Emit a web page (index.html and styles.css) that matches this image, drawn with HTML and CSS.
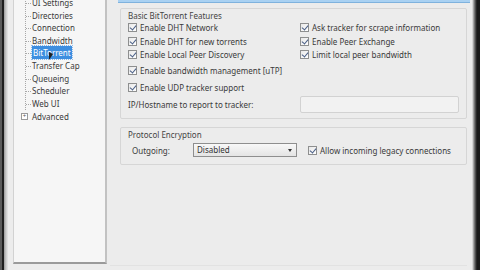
FILE: index.html
```html
<!DOCTYPE html>
<html>
<head>
<meta charset="utf-8">
<link rel="stylesheet" href="styles.css">
</head>
<body>
<div class="window">
  <div class="frame-left"></div>
  <div class="side">
    <div class="tree">
      <ul class="nodes">
        <li class="node cut">UI Settings</li>
        <li class="node">Directories</li>
        <li class="node">Connection</li>
        <li class="node">Bandwidth</li>
        <li class="node"><span class="sel">BitTorrent</span><span class="cursor"></span></li>
        <li class="node">Transfer Cap</li>
        <li class="node">Queueing</li>
        <li class="node">Scheduler</li>
        <li class="node last">Web UI</li>
      </ul>
      <div class="root"><span class="plus">+</span>Advanced</div>
    </div>
  </div>
  <div class="main">
    <div class="topbar"></div>
    <div class="group g1">
      <div class="legend">Basic BitTorrent Features</div>
      <div class="cols">
        <div class="col">
          <label class="cb"><span class="box"></span>Enable DHT Network</label>
          <label class="cb"><span class="box"></span>Enable DHT for new torrents</label>
          <label class="cb"><span class="box"></span>Enable Local Peer Discovery</label>
          <label class="cb gap"><span class="box"></span>Enable bandwidth management [uTP]</label>
          <label class="cb gap"><span class="box"></span>Enable UDP tracker support</label>
        </div>
        <div class="col c2">
          <label class="cb"><span class="box"></span>Ask tracker for scrape information</label>
          <label class="cb"><span class="box"></span>Enable Peer Exchange</label>
          <label class="cb"><span class="box"></span>Limit local peer bandwidth</label>
        </div>
      </div>
      <div class="iprow">
        <span class="iplabel">IP/Hostname to report to tracker:</span>
        <span class="input"></span>
      </div>
    </div>
    <div class="group g2">
      <div class="legend">Protocol Encryption</div>
      <div class="encrow">
        <span class="outlabel">Outgoing:</span>
        <span class="select">Disabled<span class="arrow"></span></span>
        <label class="cb inline"><span class="box"></span>Allow incoming legacy connections</label>
      </div>
    </div>
    <div class="bottomline"></div>
  </div>
  <div class="frame-right"></div>
</div>
</body>
</html>
```
FILE: styles.css
```css
* { box-sizing: border-box; }
html, body { margin: 0; padding: 0; }
body {
  width: 480px; height: 270px; overflow: hidden;
  background: #ececec;
  font-family: "Noto Sans", "Open Sans", sans-serif;
  font-size: 8px;
  color: #3a3a3a;
}
.window { display: flex; height: 270px; }
.frame-left {
  width: 8px; flex: none;
  background: linear-gradient(to right, #5a5a5a 0, #5a5a5a 2px, #1e1e1e 2px, #1e1e1e 4px, #9a9a9a 4px, #c8c8c8 6px, #e6e6e6 8px);
}
.side {
  width: 102px; flex: none;
  padding: 0 3px 6px 5px;
  display: flex;
}
.tree {
  flex: 1;
  background: #f6f6f6;
  border-left: 1px solid #d2d2d2;
  border-right: 2px solid #c2c2c2;
  border-bottom: 2px solid #9a9a9a;
  padding: 0;
  margin-top: -3px;
}
.nodes {
  list-style: none; margin: 0 0 0 11px; padding: 0;
  border-left: 1px dotted #a8a8a8;
}
.node {
  height: 12.6px; line-height: 12.6px;
  position: relative;
  padding-left: 6px;
  white-space: nowrap;
}
.node::before {
  content: ""; position: absolute; left: 0; top: 6px;
  width: 5px; border-top: 1px dotted #a8a8a8;
}
.sel {
  background: #3d8ee0;
  color: #fff;
  padding: 1px 1px;
  outline: 1px dotted #8bb9ea;
}
.cursor {
  position: absolute; left: 23px; top: 5px;
  width: 0; height: 0;
  border-left: 4px solid #222;
  border-top: 2px solid transparent;
  border-bottom: 6px solid transparent;
}
.root {
  height: 13px; line-height: 13px;
  display: flex; align-items: center;
  white-space: nowrap;
  padding-left: 7px;
}
.plus {
  width: 7px; height: 7px; border: 1px solid #9a9a9a;
  font-size: 6px; line-height: 5px; text-align: center; color: #555;
  margin-right: 4px;
  background: #fff;
}
.main {
  flex: 1;
  display: flex; flex-direction: column;
  padding: 0 5px 0 10px;
}
.topbar {
  height: 3px; margin-left: -2px; margin-right: -3px;
  background: #a9d1f2;
  border-bottom: 1px solid #7fb2dd;
  flex: none;
}
.group {
  border: 1px solid #d6d6d6;
  border-radius: 2px;
  padding: 1px 0 0 7px;
  flex: none;
}
.g1 { margin-top: 5px; height: 111px; }
.g2 { margin-top: 8px; height: 38px; }
.legend { height: 11px; line-height: 11px; color: #444; }
.cols { display: flex; }
.col { display: flex; flex-direction: column; width: 172px; }
.c2 { width: auto; }
.cb {
  display: flex; align-items: center;
  height: 13.5px; white-space: nowrap;
}
.cb.gap { height: 17px; }
.box {
  width: 9px; height: 9px; flex: none;
  border: 1px solid #8e8f8f;
  background: linear-gradient(135deg, #e8e8e8, #fff);
  margin-right: 3px;
  position: relative;
}
.box::after {
  content: ""; position: absolute; left: 2px; top: 0px;
  width: 3px; height: 5px;
  border-right: 1.5px solid #4a5f86;
  border-bottom: 1.5px solid #4a5f86;
  transform: rotate(40deg);
}
.iprow { display: flex; align-items: center; margin-top: 0px; height: 18px; }
.iplabel { width: 172px; }
.input {
  width: 159px; height: 17px;
  border: 1px solid #d2d2d2;
  border-radius: 2px;
  background: #f2f2f2;
}
.encrow { display: flex; align-items: center; height: 20px; padding-left: 4px; }
.outlabel { width: 61px; }
.select {
  width: 104px; height: 14px;
  border: 1px solid #8e8e8e;
  background: linear-gradient(#f8f8f8, #e4e4e4);
  padding-left: 3px; line-height: 12px;
  position: relative;
  color: #333;
}
.arrow {
  position: absolute; right: 4px; top: 5px;
  border-left: 2px solid transparent; border-right: 2px solid transparent;
  border-top: 3px solid #333;
}
.cb.inline { margin-left: 11px; }
.bottomline {
  margin-top: auto; margin-bottom: 4px; height: 1px; background: #e2e2e2;
  margin-left: -10px;
}
.frame-right {
  width: 8px; flex: none;
  background: linear-gradient(to right, #ececec 0, #c0c0c0 1px, #8a8a8a 2px, #3a3a3a 4px, #1a1a1a 5px);
}
```
